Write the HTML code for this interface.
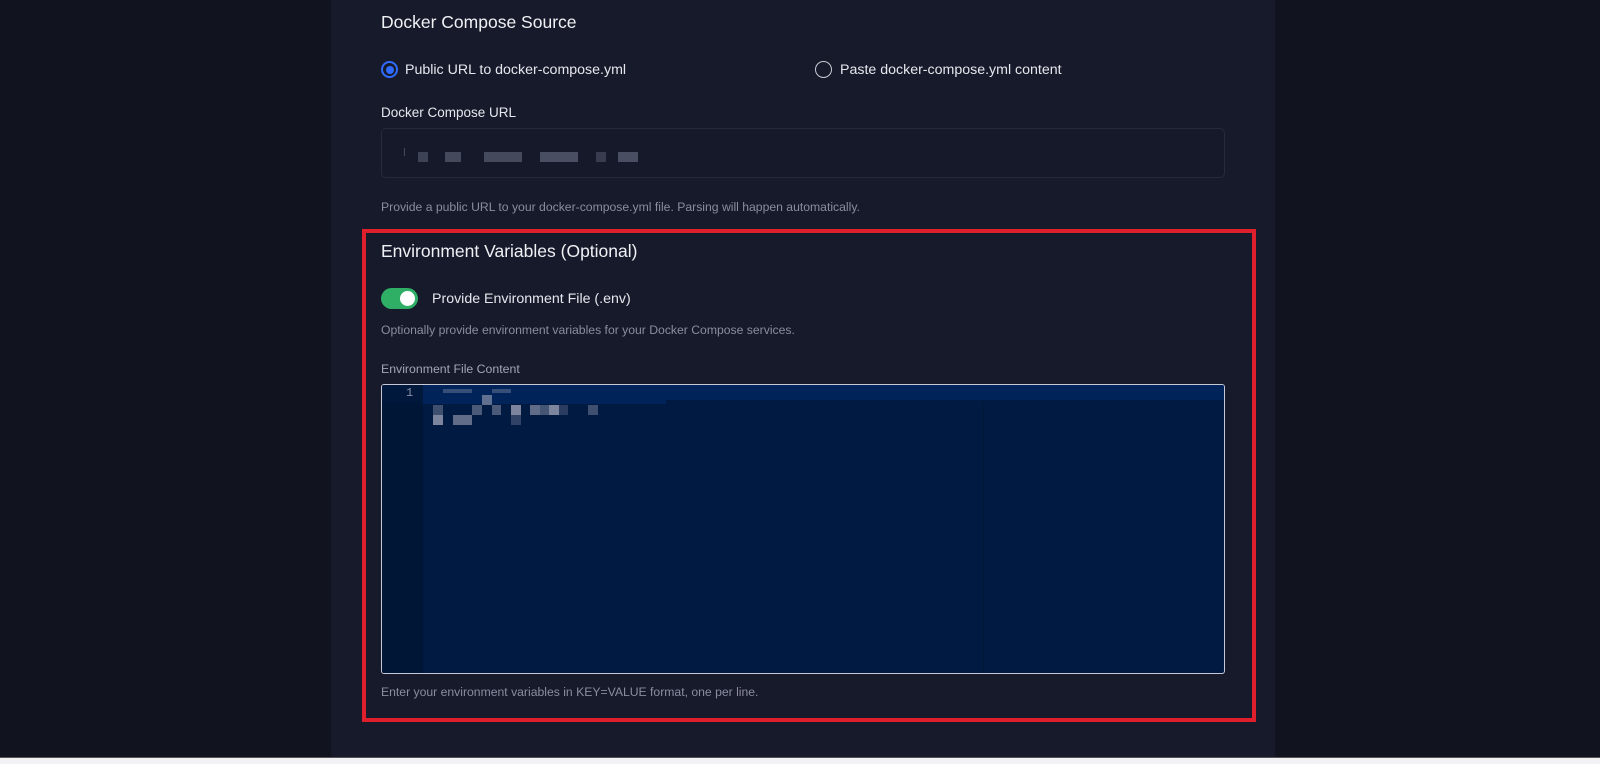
<!DOCTYPE html>
<html><head><meta charset="utf-8"><style>
*{margin:0;padding:0;box-sizing:border-box}
body{width:1600px;height:764px;background:#11131f;position:relative;overflow:hidden;font-family:"Liberation Sans","DejaVu Sans",sans-serif;color:#e8e9f0}
.panel{position:absolute;left:331px;top:0;width:944px;height:757px;background:#171a2a}
.bottom{position:absolute;left:0;top:757px;width:1600px;height:7px;background:#f2f2f4;border-top:1px solid #555}
.t{position:absolute;white-space:nowrap}
.h{font-size:17.5px;color:#f0f1f5}
.s{font-size:12.2px;color:#8a8da0}
.l{font-size:14.2px;color:#e6e7ee}
.radio{position:absolute;width:17px;height:17px;border-radius:50%}
.red{position:absolute;left:362px;top:229px;width:894px;height:493px;border:4px solid #e01f2c}
.input{position:absolute;left:381px;top:128px;width:844px;height:50px;border:1px solid #252a3d;border-radius:5px;background:#161929}
.ed{position:absolute;left:381px;top:384px;width:844px;height:290px;background:#001a41;border:1px solid #c7cad6;border-radius:3px;overflow:hidden}
.gut{position:absolute;left:0;top:0;width:41px;height:100%;background:#001636}
.px{position:absolute;background:#8a90a8}
</style></head><body>
<div class="panel"></div>
<div class="bottom"></div>
<div class="t h" style="left:381px;top:12px">Docker Compose Source</div>
<div class="radio" style="left:381px;top:61px;border:2px solid #2f6bff;"><div style="position:absolute;left:2.5px;top:2.5px;width:8px;height:8px;border-radius:50%;background:#2f6bff"></div></div>
<div class="t l" style="left:405px;top:62px">Public URL to docker-compose.yml</div>
<div class="radio" style="left:815px;top:61px;border:1.5px solid #c8cad4"></div>
<div class="t l" style="left:840px;top:62px">Paste docker-compose.yml content</div>
<div class="t" style="left:381px;top:105px;font-size:13.5px;color:#e6e7ee">Docker Compose URL</div>
<div class="input">
<div class="px" style="left:22px;top:19px;width:1px;height:8px;opacity:.4"></div>
<div class="px" style="left:36px;top:23px;width:10px;height:10px;opacity:.35"></div>
<div class="px" style="left:63px;top:23px;width:16px;height:10px;opacity:.4"></div>
<div class="px" style="left:102px;top:23px;width:38px;height:10px;opacity:.4"></div>
<div class="px" style="left:158px;top:23px;width:38px;height:10px;opacity:.45"></div>
<div class="px" style="left:214px;top:23px;width:10px;height:10px;opacity:.3"></div>
<div class="px" style="left:236px;top:23px;width:20px;height:10px;opacity:.45"></div>
</div>
<div class="t s" style="left:381px;top:200px">Provide a public URL to your docker-compose.yml file. Parsing will happen automatically.</div>
<div class="red"></div>
<div class="t h" style="left:381px;top:241px">Environment Variables (Optional)</div>
<div style="position:absolute;left:381px;top:288px;width:37px;height:21px;border-radius:11px;background:#2fae66"><div style="position:absolute;right:3px;top:3px;width:15px;height:15px;border-radius:50%;background:#fff"></div></div>
<div class="t l" style="left:432px;top:291px">Provide Environment File (.env)</div>
<div class="t s" style="left:381px;top:323px">Optionally provide environment variables for your Docker Compose services.</div>
<div class="t" style="left:381px;top:362px;font-size:12.3px;color:#a2a5b6">Environment File Content</div>
<div class="ed">
<div class="gut"></div>
<div style="position:absolute;left:41px;top:0;width:803px;height:15px;background:#002459"></div>
<div style="position:absolute;left:41px;top:0;width:243px;height:19px;background:#002459"></div>
<div style="position:absolute;left:0;top:0;width:41px;height:18px;background:#00183b"></div>
<div class="t" style="left:24px;top:1px;font-size:12px;color:#8a90a8;font-family:'Liberation Mono',monospace">1</div>
<div style="position:absolute;left:601px;top:18px;width:1px;height:272px;background:#001838"></div>
<div class="px" style="left:61px;top:4px;width:29px;height:4px;opacity:.4"></div>
<div class="px" style="left:110px;top:4px;width:19px;height:4px;opacity:.4"></div>
<div class="px" style="left:100px;top:10px;width:10px;height:10px;opacity:.7"></div>
<div class="px" style="left:51px;top:20px;width:10px;height:10px;opacity:.45"></div>
<div class="px" style="left:90px;top:20px;width:10px;height:10px;opacity:.55"></div>
<div class="px" style="left:110px;top:20px;width:9px;height:10px;opacity:.55"></div>
<div class="px" style="left:129px;top:20px;width:10px;height:10px;opacity:.9"></div>
<div class="px" style="left:148px;top:20px;width:10px;height:10px;opacity:.7"></div>
<div class="px" style="left:158px;top:20px;width:9px;height:10px;opacity:.5"></div>
<div class="px" style="left:167px;top:20px;width:10px;height:10px;opacity:.9"></div>
<div class="px" style="left:177px;top:20px;width:9px;height:10px;opacity:.3"></div>
<div class="px" style="left:206px;top:20px;width:10px;height:10px;opacity:.45"></div>
<div class="px" style="left:51px;top:30px;width:10px;height:10px;opacity:.9"></div>
<div class="px" style="left:71px;top:30px;width:19px;height:10px;opacity:.7"></div>
<div class="px" style="left:129px;top:30px;width:10px;height:10px;opacity:.35"></div>
</div>
<div class="t s" style="left:381px;top:685px">Enter your environment variables in KEY=VALUE format, one per line.</div>
</body></html>
